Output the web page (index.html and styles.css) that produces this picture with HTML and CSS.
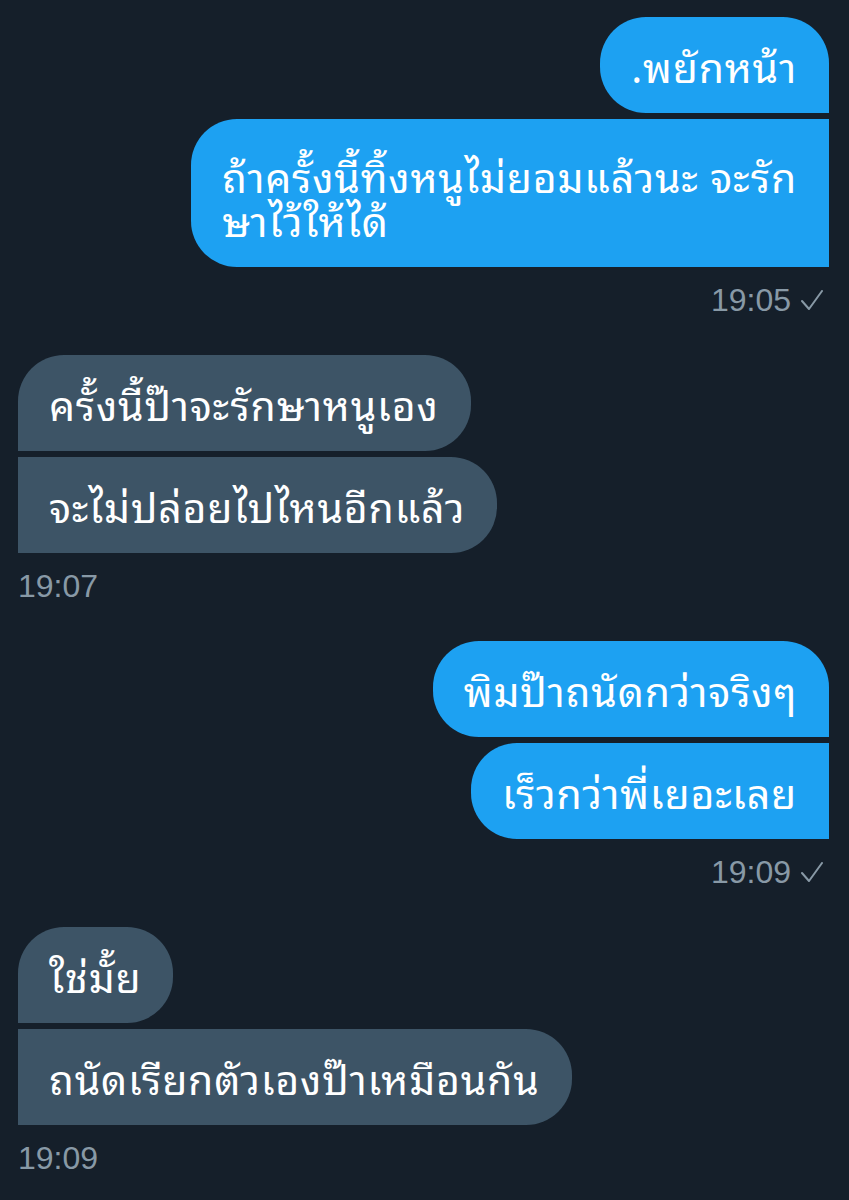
FILE: index.html
```html
<!DOCTYPE html>
<html lang="th">
<head>
<meta charset="utf-8">
<title>Chat</title>
<link rel="stylesheet" href="styles.css">
</head>
<body>
<div class="chat">
  <div class="group out">
    <div class="bubble first">.พยักหน้า</div>
    <div class="bubble last tall">ถ้าครั้งนี้ทิ้งหนูไม่ยอมแล้วนะ จะรัก<br>ษาไว้ให้ได้</div>
    <div class="meta">19:05 <svg class="check" viewBox="0 0 22 20" width="22" height="20"><polyline points="1,11 8,19 21,1" fill="none" stroke="#8899a6" stroke-width="2" stroke-linecap="round" stroke-linejoin="round"/></svg></div>
  </div>
  <div class="group in">
    <div class="bubble first">ครั้งนี้ป๊าจะรักษาหนูเอง</div>
    <div class="bubble last">จะไม่ปล่อยไปไหนอีกแล้ว</div>
    <div class="meta">19:07</div>
  </div>
  <div class="group out">
    <div class="bubble first">พิมป๊าถนัดกว่าจริงๆ</div>
    <div class="bubble last">เร็วกว่าพี่เยอะเลย</div>
    <div class="meta">19:09 <svg class="check" viewBox="0 0 22 20" width="22" height="20"><polyline points="1,11 8,19 21,1" fill="none" stroke="#8899a6" stroke-width="2" stroke-linecap="round" stroke-linejoin="round"/></svg></div>
  </div>
  <div class="group in">
    <div class="bubble first">ใช่มั้ย</div>
    <div class="bubble last">ถนัดเรียกตัวเองป๊าเหมือนกัน</div>
    <div class="meta">19:09</div>
  </div>
</div>
</body>
</html>
```

FILE: styles.css
```css
html, body {
  margin: 0;
  padding: 0;
  background: #151f2a;
}
body {
  width: 849px;
  height: 1200px;
  overflow: hidden;
}
.chat {
  padding: 17px 20px 0 18px;
  display: flex;
  flex-direction: column;
  gap: 35px;
}
.group {
  display: flex;
  flex-direction: column;
  gap: 6px;
}
.group.out { align-items: flex-end; }
.group.in { align-items: flex-start; }
.bubble {
  font-family: "Noto Sans Thai Looped", "Noto Sans Thai", "Noto Sans", sans-serif;
  font-size: 41px;
  line-height: 44px;
  letter-spacing: 0.8px;
  color: #ffffff;
  padding: 26px 32px 26px 31px;
  border-radius: 46px;
  white-space: nowrap;
}
.bubble.tall { padding-top: 34px; }
.out .bubble {
  background: #1da1f2;
  border-bottom-right-radius: 0;
}
.out .bubble.last { border-top-right-radius: 0; }
.in .bubble {
  background: #3d5466;
  border-bottom-left-radius: 0;
}
.in .bubble.last { border-top-left-radius: 0; }
.meta {
  font-family: "Liberation Sans", Arial, sans-serif;
  font-size: 32px;
  line-height: 40px;
  color: #8899a6;
  margin-top: 7px;
  display: flex;
  align-items: center;
  gap: 10px;
}
.out .meta { padding-right: 6px; }
.check { display: block; }
```
